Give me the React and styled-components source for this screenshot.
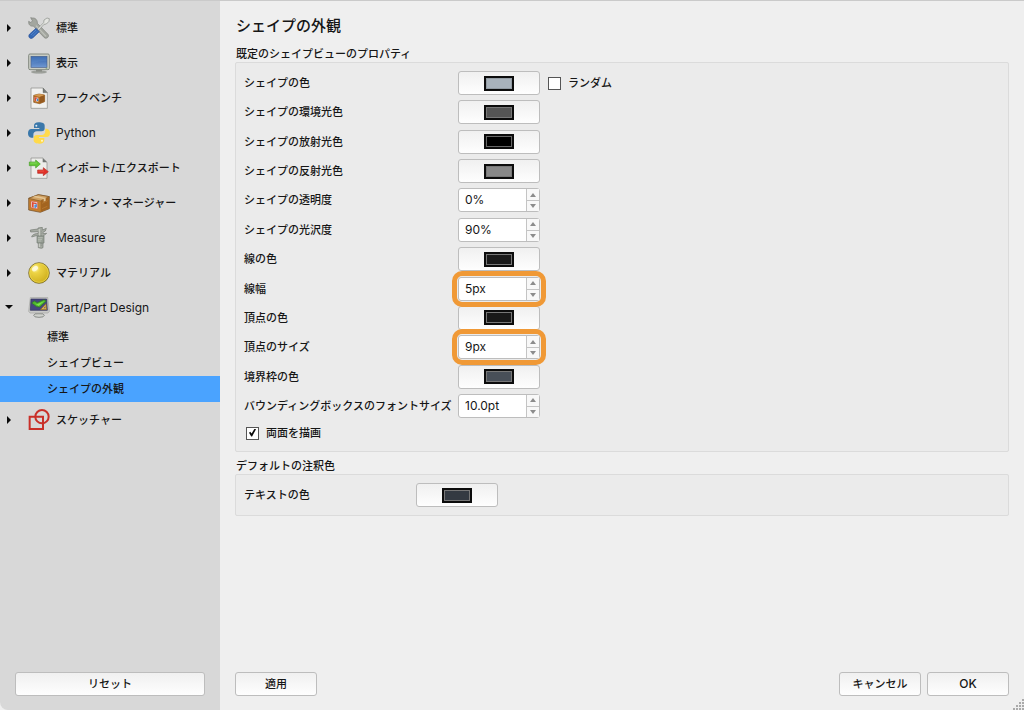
import React, { useState } from 'react';
import styled, { createGlobalStyle, css } from 'styled-components';

const GlobalStyle = createGlobalStyle`
  * {
    box-sizing: border-box;
  }

  body {
    margin: 0;
    background: #efefef;
    color: #161616;
    font-family: Inter, "Noto Sans CJK JP", sans-serif;
    font-size: 11px;
    font-weight: 500;
    line-height: 16px;
  }

  button, input {
    color: inherit;
    font: inherit;
  }
`;

const Window = styled.div`
  display: grid;
  grid-template-columns: 220px 1fr;
  min-height: 100vh;
  border-top: 1px solid #cacaca;
`;

const Sidebar = styled.aside`
  display: flex;
  flex-direction: column;
  justify-content: space-between;
  padding: 9px 0 14px;
  background: #d8d8d8;
  border-bottom-left-radius: 8px;
`;

const Tree = styled.ul`
  margin: 0;
  padding: 0;
  list-style: none;
`;

const SubTree = styled(Tree)`
  margin-top: -1px;
`;

const TreeButton = styled.button`
  display: flex;
  align-items: center;
  width: 100%;
  height: 35px;
  padding: 0 0 0 4px;
  border: 0;
  background: none;
  font-size: ${props => (props.$latin ? '12px' : '11px')};
  font-weight: ${props => (props.$latin ? 400 : 500)};
  text-align: left;
`;

const SubTreeButton = styled(TreeButton)`
  height: 26px;
  padding-left: 47px;
  background: ${props => (props.$selected ? '#4aa3ff' : 'none')};
`;

const Arrow = styled.svg`
  flex: none;
  width: 11px;
  height: 11px;
  margin-right: 13px;
  transform: ${props => (props.$open ? 'rotate(90deg)' : 'none')};
`;

const IconSvg = styled.svg`
  flex: none;
  width: 22px;
  height: 22px;
  margin-right: 6px;
`;

const Main = styled.main`
  display: flex;
  flex-direction: column;
  min-width: 0;
  padding: 15px 15px 14px;
`;

const Title = styled.h1`
  margin: 0 0 10px 1px;
  font-size: 15px;
  font-weight: 500;
  line-height: 20px;
`;

const Fieldset = styled.section`
  margin-bottom: 6px;
`;

const Legend = styled.h2`
  margin: 0 0 0 1px;
  font-size: 11px;
  font-weight: 500;
  line-height: 16px;
`;

const Group = styled.div`
  padding: 8px;
  border: 1px solid #dbdbdb;
  border-radius: 2px;
  background: #ebebeb;
`;

const Rows = styled.div`
  display: grid;
  align-content: space-between;
  min-height: 347px;
`;

const Row = styled.div`
  display: grid;
  grid-template-columns: ${props => (props.$compact ? '164px' : '206px')} 82px 1fr;
  align-items: center;
  gap: 8px;
`;

const Label = styled.label`
  white-space: nowrap;
`;

const PushButton = styled.button`
  display: flex;
  align-items: center;
  justify-content: center;
  width: ${props => (props.$wide ? '100%' : '82px')};
  height: 24px;
  padding: 0;
  border: 1px solid #bdbdbd;
  border-radius: 3px;
  background: linear-gradient(#f0f0f0, #fefefe);
  font-size: ${props => (props.$latin ? '12px' : '11px')};
`;

const Swatch = styled.span`
  width: 30px;
  height: 15px;
  border: 2px solid #0c0c0c;
  background: ${props => props.$color};
  box-shadow: inset 0 0 0 1px ${props => props.$edge || '#777'};
`;

const Spin = styled.div`
  position: relative;
  display: grid;
  grid-template-columns: 1fr 13px;
  height: 24px;
  border: 1px solid #bdbdbd;
  border-radius: 3px;
  background: #fff;

  ${props => props.$highlight && css`
    &::after {
      content: '';
      position: absolute;
      z-index: 1;
      inset: -7px;
      border: 5px solid #f09936;
      border-radius: 10px;
      pointer-events: none;
    }
  `}
`;

const SpinInput = styled.input`
  width: 100%;
  min-width: 0;
  padding: 0 0 0 6px;
  border: 0;
  background: none;
  font-size: 12px;
  font-weight: 400;
`;

const Steps = styled.div`
  display: grid;
  grid-template-rows: 1fr 1fr;
  border-left: 1px solid #c4c4c4;
  background: #f8f8f8;
`;

const StepButton = styled.button`
  display: grid;
  place-items: center;
  padding: 0;
  border: 0;
  background: none;

  & + & {
    border-top: 1px solid #c4c4c4;
  }

  svg {
    width: 6px;
    height: 4px;
  }
`;

const CheckLabel = styled.label`
  display: flex;
  align-items: center;
  gap: 7px;
`;

const CheckBox = styled.input`
  display: grid;
  width: 13px;
  height: 13px;
  margin: 0;
  border: 1px solid #555;
  background: #fff;
  appearance: none;

  &:checked::before {
    content: '';
    width: 7px;
    height: 8px;
    margin: 1px 2px;
    background: #0a0a0a;
    clip-path: polygon(0 52%, 18% 40%, 38% 64%, 80% 0, 100% 10%, 44% 100%, 32% 100%);
  }
`;

const CheckRow = styled.div`
  padding: 7px 0 2px 2px;
`;

const Footer = styled.footer`
  display: flex;
  gap: 6px;
  margin-top: auto;
`;

const Spacer = styled.div`
  flex: 1;
`;

const ResetBar = styled.div`
  padding: 0 15px;
`;

const Grip = styled.svg`
  position: absolute;
  right: 0;
  bottom: 0;
  width: 11px;
  height: 11px;
`;

const ToolsIcon = () => (
  <IconSvg viewBox="0 0 66 66">
    <path d="M13 3 8 2l5 9-4 6-7-4c-1 10 5 16 14 14l33 35c7 5 16-3 11-10L28 19C29 9 22 2 13 3z" fill="#a3a69f" stroke="#7d817b" strokeWidth="2" />
    <path d="m24 26 30 32" stroke="#bfc2bb" strokeWidth="4" />
    <path d="m28 36 19-19 1-8 9-6 7 2-1 8-8 8-7 1-16 18z" fill="#e4e5e1" stroke="#888c87" strokeWidth="2" />
    <path d="M24 34 5 51c-7 8 2 18 10 11l19-18z" fill="#3569b5" stroke="#2c529a" strokeWidth="2" />
    <path d="M24 39 9 54M28 43 14 57" stroke="#5f8fd2" strokeWidth="2" />
  </IconSvg>
);

const DisplayIcon = () => (
  <IconSvg viewBox="0 0 66 66">
    <defs>
      <linearGradient id="screen" x1="0" y1="0" x2="0" y2="1">
        <stop offset="0" stopColor="#2f5ea8" />
        <stop offset="1" stopColor="#6f98d2" />
      </linearGradient>
    </defs>
    <ellipse cx="33" cy="60" rx="23" ry="4" fill="#a2a59f" stroke="#777b76" />
    <path d="M24 51h18v8H24z" fill="#8b8e88" />
    <rect x="2" y="6" width="62" height="47" rx="4" fill="#c9cdc4" stroke="#848a81" strokeWidth="3" />
    <rect x="9" y="13" width="48" height="33" fill="url(#screen)" stroke="#4a618a" strokeWidth="2" />
    <path d="M10 14h46v12q-23 0-46 9z" fill="#6594d0" opacity=".3" />
    <path d="M53 49h5" stroke="#6c9d54" strokeWidth="2" />
  </IconSvg>
);

const WorkbenchIcon = () => (
  <IconSvg viewBox="0 0 66 66">
    <path d="M9 3h36l13 14v47H9z" fill="#f1f1ef" stroke="#858783" strokeWidth="2" />
    <path d="M45 3v14h13z" fill="#777a77" stroke="#5f625f" />
    <path d="m17 25 16-4 17 3v20l-15 6-18-4z" fill="#b86d20" stroke="#8a5a28" strokeWidth="2" />
    <path d="m17 25 16-4 17 3-15 6z" fill="#d49a52" />
    <path d="M35 30v19l14-6V25z" fill="#955a1f" />
    <path d="m20 30 11 2v12l-11-2z" fill="#e7edf2" />
    <path d="m20 30 8 2v3h-4v7h-4z" fill="#d94b35" />
    <path d="m26 36 5-2v8h-5z" fill="#4b83bd" />
  </IconSvg>
);

const PythonIcon = () => (
  <IconSvg viewBox="0 0 66 66">
    <path d="M32 1C22 1 18 5 18 12v6h16v3H10C3 21 0 27 0 34s3 13 10 13h6v-8c0-7 4-11 11-11h14c6 0 9-4 9-9v-8C50 4 43 1 32 1z" fill="#3b78aa" />
    <path d="M34 65c10 0 15-4 15-11v-6H33v-3h23c7 0 10-6 10-12s-3-13-10-13h-4v7c0 8-5 12-11 12H27c-6 0-10 4-10 9v7c0 7 7 10 17 10z" fill="#ffda4b" />
    <circle cx="25" cy="11" r="3" fill="#dceaf4" />
    <circle cx="42" cy="56" r="3" fill="#fff8ce" />
  </IconSvg>
);

const ImportExportIcon = () => (
  <IconSvg viewBox="0 0 66 66">
    <path d="M9 3h35l13 13v48H9z" fill="#ededeb" stroke="#858783" strokeWidth="2" />
    <path d="M44 3v13h13z" fill="#727572" />
    <path d="M4 15h19V9l14 12-14 12v-7H4z" fill="#63c735" stroke="#4a9d2c" strokeWidth="2" />
    <path d="M7 18h19" stroke="#9ce477" strokeWidth="2" />
    <path d="M29 39h17v-7l15 12-15 12v-7H29z" fill="#e23128" stroke="#b82a22" strokeWidth="2" />
    <path d="M31 42h17" stroke="#f06b59" strokeWidth="2" />
  </IconSvg>
);

const AddonIcon = () => (
  <IconSvg viewBox="0 0 66 66">
    <path d="m2 19 29-11 33 6v36L37 61 2 54z" fill="#c4802f" stroke="#6b451f" strokeWidth="2" />
    <path d="m2 19 29-11 33 6-27 13z" fill="#d2a263" stroke="#7d5829" strokeWidth="2" />
    <path d="M38 28v32l25-11V16z" fill="#a3641f" />
    <path d="m14 15 33 6v8l6-3v-8L23 11z" fill="#e2c493" />
    <path d="m9 27 20 3v21L9 47z" fill="#eceff2" stroke="#d4533c" strokeWidth="2" />
    <path d="m12 30 14 3v4l-9-2v12l-5-1z" fill="#dc4a35" />
    <path d="m19 38 8-2v7l-3 5-5-1z" fill="#5b8fd0" />
    <path d="m42 34 17-8M42 50l16-7" stroke="#bd8139" strokeWidth="2" />
  </IconSvg>
);

const MeasureIcon = () => (
  <IconSvg viewBox="0 0 66 66">
    <path d="M7 9 30 6V3l13-2v8l12-5-3 8-7 4v4l11-1-11 9v34l-5 2-9-2V24L11 30c1-5 4-9 20-11v-5L8 15z" fill="#a6aba3" stroke="#747a72" strokeWidth="2" />
    <path d="m34 6v54" stroke="#cdd0c8" strokeWidth="3" />
    <path d="M40 11v48" stroke="#7d847b" strokeWidth="2" strokeDasharray="3 3" />
    <path d="M27 27h21v21H27z" fill="#989f96" stroke="#747b72" strokeWidth="2" />
    <path d="m30 32h14m-14 5h12m-12 5h10" stroke="#c7cbc2" strokeWidth="2" />
  </IconSvg>
);

const MaterialIcon = () => (
  <IconSvg viewBox="0 0 66 66">
    <defs>
      <radialGradient id="ball" cx=".32" cy=".28" r=".75">
        <stop offset="0" stopColor="#fff9b0" />
        <stop offset=".3" stopColor="#ecd344" />
        <stop offset="1" stopColor="#cfaf1d" />
      </radialGradient>
    </defs>
    <circle cx="33" cy="33" r="31" fill="url(#ball)" stroke="#5f500f" strokeWidth="2" />
    <circle cx="33" cy="33" r="28" fill="none" stroke="#efdc58" strokeWidth="2" />
    <ellipse cx="21" cy="20" rx="10" ry="7" fill="#fffde9" opacity=".8" transform="rotate(-35 21 20)" />
  </IconSvg>
);

const PartIcon = () => (
  <IconSvg viewBox="0 0 66 66">
    <ellipse cx="33" cy="55" rx="16" ry="6" fill="#d0d2ce" stroke="#898c89" strokeWidth="3" />
    <path d="M23 46h20v6H23z" fill="#9b9e9a" />
    <path d="m7 2 52-1 5 42-4 5H6l-4-5z" fill="#c9cac8" stroke="#a3a5a2" strokeWidth="2" />
    <path d="M9 6h47l2 34H7z" fill="#45467f" stroke="#30325a" strokeWidth="2" />
    <path d="m11 18 8-6 9 5 20-9 7 4-20 18-9-1z" fill="#4db52d" stroke="#2d6f2a" strokeWidth="2" />
    <path d="m19 19 8 3 22-10-17 15z" fill="#7fe64d" />
    <path d="m37 38 17-18 2 18z" fill="#dcb24c" stroke="#8a6529" strokeWidth="2" />
    <path d="m47 34 5-6v6z" fill="#59538a" />
  </IconSvg>
);

const SketcherIcon = () => (
  <IconSvg viewBox="0 0 66 66" fill="none" stroke="#c92f28" strokeWidth="6">
    <path d="M5 23h40v37H5z" />
    <circle cx="42" cy="23" r="20" />
  </IconSvg>
);

const pages = [
  { label: '標準', Icon: ToolsIcon },
  { label: '表示', Icon: DisplayIcon },
  { label: 'ワークベンチ', Icon: WorkbenchIcon },
  { label: 'Python', Icon: PythonIcon, latin: true },
  { label: 'インポート/エクスポート', Icon: ImportExportIcon },
  { label: 'アドオン・マネージャー', Icon: AddonIcon },
  { label: 'Measure', Icon: MeasureIcon, latin: true },
  { label: 'マテリアル', Icon: MaterialIcon },
  {
    label: 'Part/Part Design',
    Icon: PartIcon,
    latin: true,
    children: ['標準', 'シェイプビュー', 'シェイプの外観']
  },
  { label: 'スケッチャー', Icon: SketcherIcon }
];

const fields = [
  { id: 'shape', label: 'シェイプの色', color: '#a8b2bb', edge: '#929ba3', random: true },
  { id: 'ambient', label: 'シェイプの環境光色', color: '#555', edge: '#777' },
  { id: 'emissive', label: 'シェイプの放射光色', color: '#000', edge: '#666' },
  { id: 'specular', label: 'シェイプの反射光色', color: '#888', edge: '#777' },
  { id: 'transparency', label: 'シェイプの透明度', value: 0, unit: '%' },
  { id: 'shininess', label: 'シェイプの光沢度', value: 90, unit: '%' },
  { id: 'line', label: '線の色', color: '#191919' },
  { id: 'lineWidth', label: '線幅', value: 5, unit: 'px', highlight: true },
  { id: 'vertex', label: '頂点の色', color: '#191919' },
  { id: 'vertexSize', label: '頂点のサイズ', value: 9, unit: 'px', highlight: true },
  { id: 'bounding', label: '境界枠の色', color: '#484f58' },
  { id: 'fontSize', label: 'バウンディングボックスのフォントサイズ', value: 10, unit: 'pt', digits: 1 }
];

const SpinBox = ({ id, initial, unit, digits = 0, highlight }) => {
  const [value, setValue] = useState(initial);
  const step = amount => setValue(Math.max(0, value + amount));

  return (
    <Spin $highlight={highlight}>
      <SpinInput
        id={id}
        value={`${value.toFixed(digits)}${unit}`}
        onChange={e => setValue(parseFloat(e.target.value) || 0)}
      />
      <Steps>
        <StepButton type="button" aria-label="+" onClick={() => step(1)}>
          <svg viewBox="0 0 6 4"><path d="M0 4 3 0l3 4z" fill="#8c8c8c" /></svg>
        </StepButton>
        <StepButton type="button" aria-label="-" onClick={() => step(-1)}>
          <svg viewBox="0 0 6 4"><path d="m0 0 3 4 3-4z" fill="#8c8c8c" /></svg>
        </StepButton>
      </Steps>
    </Spin>
  );
};

const ColorButton = ({ id, color, edge }) => (
  <PushButton type="button" id={id}>
    <Swatch $color={color} $edge={edge} />
  </PushButton>
);

const PageTree = () => {
  const [selected, setSelected] = useState('シェイプの外観');

  return (
    <Tree>
      {pages.map(({ label, Icon, latin, children }) => (
        <li key={label}>
          <TreeButton type="button" $latin={latin} aria-expanded={!!children}>
            <Arrow viewBox="0 0 11 11" $open={!!children}>
              <path d="M3 2v8l4-4z" fill="#0a0a0a" />
            </Arrow>
            <Icon />
            {label}
          </TreeButton>
          {children && (
            <SubTree>
              {children.map(child => (
                <li key={child}>
                  <SubTreeButton type="button" $selected={child === selected} onClick={() => setSelected(child)}>
                    {child}
                  </SubTreeButton>
                </li>
              ))}
            </SubTree>
          )}
        </li>
      ))}
    </Tree>
  );
};

const App = () => (
  <>
    <GlobalStyle />
    <Window>
      <Sidebar>
        <PageTree />
        <ResetBar>
          <PushButton type="button" $wide>リセット</PushButton>
        </ResetBar>
      </Sidebar>
      <Main>
        <Title>シェイプの外観</Title>
        <Fieldset>
          <Legend>既定のシェイプビューのプロパティ</Legend>
          <Group>
            <Rows>
              {fields.map(({ id, label, color, edge, value, unit, digits, highlight, random }) => (
                <Row key={id}>
                  <Label htmlFor={id}>{label}</Label>
                  {color
                    ? <ColorButton id={id} color={color} edge={edge} />
                    : <SpinBox id={id} initial={value} unit={unit} digits={digits} highlight={highlight} />}
                  {random && (
                    <CheckLabel>
                      <CheckBox type="checkbox" />
                      ランダム
                    </CheckLabel>
                  )}
                </Row>
              ))}
            </Rows>
            <CheckRow>
              <CheckLabel>
                <CheckBox type="checkbox" defaultChecked />
                両面を描画
              </CheckLabel>
            </CheckRow>
          </Group>
        </Fieldset>
        <Fieldset>
          <Legend>デフォルトの注釈色</Legend>
          <Group>
            <Row $compact>
              <Label htmlFor="text">テキストの色</Label>
              <ColorButton id="text" color="#343a42" />
            </Row>
          </Group>
        </Fieldset>
        <Footer>
          <PushButton type="button">適用</PushButton>
          <Spacer />
          <PushButton type="button">キャンセル</PushButton>
          <PushButton type="button" $latin>OK</PushButton>
        </Footer>
      </Main>
    </Window>
    <Grip viewBox="0 0 11 11">
      <path d="M9 1h2M6 4h2M9 4h2M3 7h2M6 7h2M9 7h2M0 10h2M3 10h2M6 10h2M9 10h2" stroke="#aaa" strokeWidth="2" />
    </Grip>
  </>
);

export default App;
